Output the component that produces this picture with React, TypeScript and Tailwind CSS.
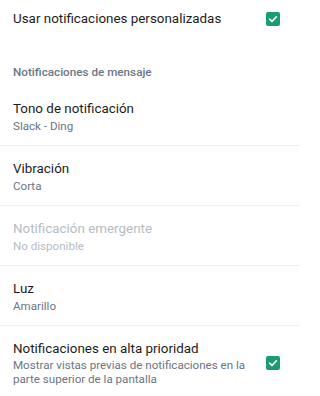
import React from "react";

function Check() {
  return (
    <div className="w-[14px] h-[14px] rounded-[2px] bg-[#1b9b72] flex items-center justify-center shrink-0">
      <svg width="10" height="10" viewBox="0 0 10 10" fill="none">
        <path d="M1.6 5.2 L4 7.4 L8.4 2.8" stroke="white" strokeWidth="1.6" strokeLinecap="round" strokeLinejoin="round" />
      </svg>
    </div>
  );
}

function Row({ title, sub, disabled }: { title: string; sub: string; disabled?: boolean }) {
  return (
    <div className="border-t border-[#f0f0f0] px-[13px] pt-[14px] pb-[11px]">
      <div className={`text-[13.4px] leading-[18px] ${disabled ? "text-[#b5bcc4]" : "text-[#1d1c1d]"}`}>{title}</div>
      <div className={`text-[11.6px] leading-[16px] ${disabled ? "text-[#b5bcc4]" : "text-[#6b7582]"}`}>{sub}</div>
    </div>
  );
}

export default function App() {
  return (
    <div className="w-[300px] h-[396px] bg-white overflow-hidden" style={{ fontFamily: "Roboto, 'Noto Sans', sans-serif" }}>
      <div className="flex items-center justify-between pl-[13px] pr-[20px] pt-[10px]">
        <div className="text-[13.4px] leading-[18px] text-[#1d1c1d]">Usar notificaciones personalizadas</div>
        <Check />
      </div>
      <div className="px-[13px] pt-[36px] pb-[20px] text-[11.7px] leading-[16px] font-medium text-[#6b7785]">
        Notificaciones de mensaje
      </div>
      <div className="px-[13px] pb-[11px]">
        <div className="text-[13.4px] leading-[18px] text-[#1d1c1d]">Tono de notificación</div>
        <div className="text-[11.6px] leading-[16px] text-[#6b7582]">Slack - Ding</div>
      </div>
      <Row title="Vibración" sub="Corta" />
      <Row title="Notificación emergente" sub="No disponible" disabled />
      <Row title="Luz" sub="Amarillo" />
      <div className="border-t border-[#f0f0f0] flex items-center pl-[13px] pr-[20px] pt-[14px] pb-[11px] gap-[10px]">
        <div className="flex-1">
          <div className="text-[13.4px] leading-[18px] text-[#1d1c1d]">Notificaciones en alta prioridad</div>
          <div className="text-[11.6px] leading-[13.5px] text-[#6b7582] mt-[1px]">
            Mostrar vistas previas de notificaciones en la parte superior de la pantalla
          </div>
        </div>
        <Check />
      </div>
    </div>
  );
}
